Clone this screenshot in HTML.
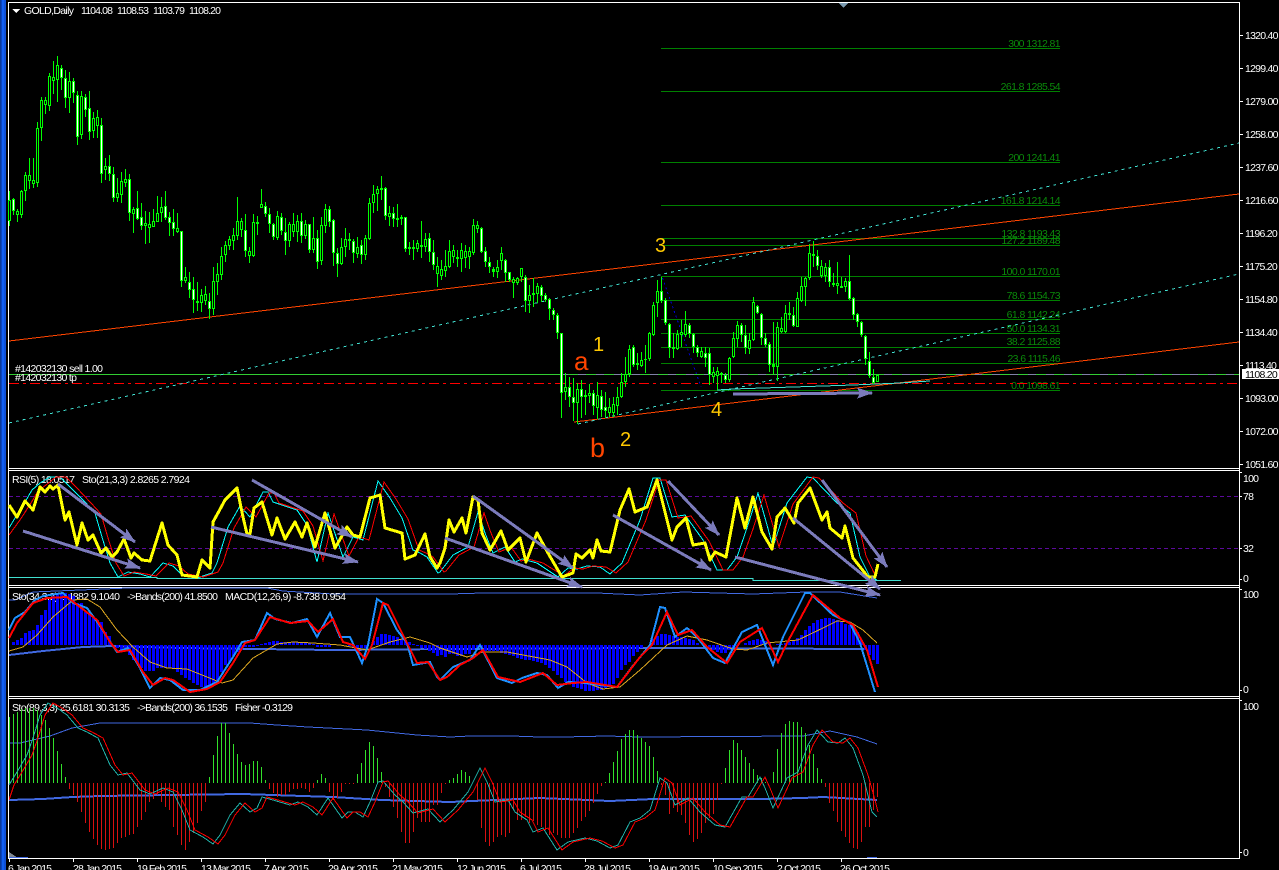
<!DOCTYPE html>
<html><head><meta charset="utf-8"><title>GOLD,Daily</title>
<style>
html,body{margin:0;padding:0;background:#000;width:1279px;height:870px;overflow:hidden}
svg{display:block;position:absolute;left:0;top:0}
text{font-family:"Liberation Sans",sans-serif;font-size:10.5px;fill:#fff;white-space:pre}
.ax{letter-spacing:-.75px}
.fib{fill:#0a8a0a;letter-spacing:-.6px;text-anchor:end}
.wave{font-size:20px;fill:#ffc800}
.wr{fill:#ff4500}
</style></head><body>
<svg width="1279" height="870" viewBox="0 0 1279 870" shape-rendering="crispEdges">
<defs>
<marker id="ah" markerUnits="userSpaceOnUse" markerWidth="18" markerHeight="14" refX="15" refY="7" orient="auto"><path d="M0 1.5L16 7L0 12.5L3 7z" fill="#7b7bbb"/></marker>
<clipPath id="c3"><rect x="9" y="699" width="870" height="159"/></clipPath>
<clipPath id="c2"><rect x="9" y="471" width="870" height="114"/></clipPath>
</defs>
<rect width="1279" height="870" fill="#000"/>
<!-- left strip -->
<rect x="0" y="0" width="1" height="870" fill="#0a3a9a"/>
<rect x="1" y="0" width="1" height="870" fill="#0c44c0"/>
<rect x="2" y="0" width="2" height="870" fill="#1260f0"/>
<rect x="4" y="0" width="2" height="870" fill="#0f50d8"/>
<!-- frame -->
<g fill="#fff">
<rect x="8" y="2" width="1232" height="1"/>
<rect x="8" y="2" width="1" height="856"/>
<rect x="1239" y="2" width="1" height="856"/>
<rect x="8" y="468" width="1232" height="1"/><rect x="8" y="470" width="1232" height="1"/>
<rect x="8" y="585" width="1232" height="1"/><rect x="8" y="587" width="1232" height="1"/>
<rect x="8" y="696" width="1232" height="1"/><rect x="8" y="698" width="1232" height="1"/>
<rect x="8" y="858" width="1232" height="1"/>
</g>
<polygon points="839,3 848,3 843.5,8" fill="#7a9ab0"/>
<polygon points="12,9 20,9 16,13" fill="#fff"/>
<!-- axis ticks -->
<path d="M1240 35.5h3M1240 68.5h3M1240 101.5h3M1240 134.5h3M1240 167.5h3M1240 200.5h3M1240 233.5h3M1240 266.5h3M1240 299.5h3M1240 332.5h3M1240 365.5h3M1240 398.5h3M1240 431.5h3M1240 464.5h3M1240 472.5h2M1240 496.5h2M1240 548.5h2M1240 579.5h2M1240 589.5h2M1240 690.5h2M1240 700.5h2M1240 852.5h2" stroke="#fff" fill="none"/>
<path d="M9.5 859v3M73.5 859v3M137.5 859v3M201.5 859v3M265.5 859v3M329.5 859v3M393.5 859v3M457.5 859v3M521.5 859v3M585.5 859v3M649.5 859v3M713.5 859v3M777.5 859v3M841.5 859v3" stroke="#fff" fill="none"/>
<!-- header text -->
<text x="24" y="14" textLength="50">GOLD,Daily</text>
<text x="81" y="14" textLength="32">1104.08</text><text x="117" y="14" textLength="32">1108.53</text><text x="153" y="14" textLength="32">1103.79</text><text x="189" y="14" textLength="32">1108.20</text>
<!-- price axis -->
<g class="ax">
<text x="1245" y="39">1320.40</text><text x="1245" y="72">1299.40</text><text x="1245" y="105">1279.00</text><text x="1245" y="138">1258.00</text><text x="1245" y="171">1237.60</text><text x="1245" y="204">1216.60</text><text x="1245" y="237">1196.20</text><text x="1245" y="270">1175.20</text><text x="1245" y="303">1154.80</text><text x="1245" y="336">1134.40</text><text x="1245" y="369">1113.40</text><text x="1245" y="402">1093.00</text><text x="1245" y="435">1072.00</text><text x="1245" y="468">1051.60</text>
<text x="1243" y="482">100</text><text x="1243" y="500">78</text><text x="1243" y="552">32</text><text x="1243" y="582">0</text>
<text x="1243" y="598">100</text><text x="1243" y="693">0</text><text x="1243" y="710">100</text><text x="1243" y="856">0</text>
</g>
<rect x="1242" y="369" width="37" height="10" fill="#fff"/>
<text x="1245" y="378" class="ax" style="fill:#000">1108.20</text>
<!-- fib levels -->
<path d="M661 48.5H1060M661 91.5H1060M661 162.5H1060M661 205.5H1060M661 238.5H1060M661 245.5H1060M661 276.5H1060M661 300.5H1060M661 319.5H1060M661 333.5H1060M661 347.5H1060M661 363.5H1060M661 390.5H1060" stroke="#008000" fill="none"/>
<text class="fib" x="1060" y="47">300 1312.81</text><text class="fib" x="1060" y="90">261.8 1285.54</text><text class="fib" x="1060" y="161">200 1241.41</text><text class="fib" x="1060" y="204">161.8 1214.14</text><text class="fib" x="1060" y="237">132.8 1193.43</text><text class="fib" x="1060" y="244">127.2 1189.48</text><text class="fib" x="1060" y="275">100.0 1170.01</text><text class="fib" x="1060" y="299">78.6 1154.73</text><text class="fib" x="1060" y="318">61.8 1142.24</text><text class="fib" x="1060" y="332">50.0 1134.31</text><text class="fib" x="1060" y="345">38.2 1125.88</text><text class="fib" x="1060" y="362">23.6 1115.46</text><text class="fib" x="1060" y="389">0.0 1098.61</text>
<!-- order lines -->
<path d="M9 374.5H1239" stroke="#32cd32" fill="none"/>
<path d="M560 374.5H1239" stroke="#8080a8" stroke-dasharray="8 10" fill="none"/>
<path d="M9 383.5H1239" stroke="#f00" stroke-dasharray="10 4 3 4" fill="none"/>
<text x="15" y="372" textLength="88">#142032130 sell 1.00</text>
<text x="15" y="381" textLength="62">#142032130 tp</text>
<!-- trend lines -->
<path d="M9 341L1239 194M574 422L1239 342" stroke="#ff4500" fill="none"/>
<path d="M9 423L1239 143M578 424L1239 274" stroke="#40e0d0" stroke-dasharray="3 4" fill="none"/>
<path d="M662.5 278L701 387" stroke="#0000cd" stroke-dasharray="2 3" fill="none"/>
<path d="M717 390L733 389L793 387L853 385L900 383L930 381" stroke="#40e0d0" fill="none"/>
<!-- candles: wicks -->
<path stroke="#00ff00" fill="none" d="M9.5 191V226M13.5 198V215M17.5 209V222M21.5 190V218M25.5 172V201M29.5 158V189M33.5 158V188M37.5 122V187M41.5 97V141M45.5 97V114M49.5 73V111M53.5 61V94M57.5 56V102M61.5 65V90M65.5 70V108M69.5 72V113M73.5 78V103M77.5 91V145M81.5 91V139M85.5 94V117M89.5 91V140M93.5 112V138M97.5 110V138M101.5 118V183M105.5 158V180M109.5 155V181M113.5 167V202M117.5 178V202M121.5 172V203M125.5 169V187M129.5 174V221M133.5 207V233M137.5 191V220M141.5 203V230M145.5 211V244M149.5 212V243M153.5 209V227M157.5 196V222M161.5 197V222M165.5 191V220M169.5 212V236M173.5 209V236M177.5 213V233M181.5 232V287M185.5 267V283M189.5 272V298M193.5 277V313M197.5 282V311M201.5 289V312M205.5 286V305M209.5 293V319M213.5 267V315M217.5 263V295M221.5 247V280M225.5 241V262M229.5 236V250M233.5 228V250M237.5 197V240M241.5 218V237M245.5 214V257M249.5 247V263M253.5 214V257M257.5 216V235M261.5 189V208M265.5 202V217M269.5 208V233M273.5 223V240M277.5 211V240M281.5 213V235M285.5 218V255M289.5 222V247M293.5 213V237M297.5 215V242M301.5 213V243M305.5 220V239M309.5 224V253M313.5 217V253M317.5 230V269M321.5 217V265M325.5 204V233M329.5 206V227M333.5 219V266M337.5 248V277M341.5 238V265M345.5 228V257M349.5 233V250M353.5 239V263M357.5 237V258M361.5 240V264M365.5 235V260M369.5 198V240M373.5 185V213M377.5 186V211M381.5 176V200M385.5 187V220M389.5 206V226M393.5 207V227M397.5 204V227M401.5 215V225M405.5 217V252M409.5 242V255M413.5 240V260M417.5 240V252M421.5 221V258M425.5 233V252M429.5 233V262M433.5 240V270M437.5 257V287M441.5 260V280M445.5 250V277M449.5 240V268M453.5 245V263M457.5 250V267M461.5 243V272M465.5 245V268M469.5 247V269M473.5 219V255M477.5 221V233M481.5 227V253M485.5 247V267M489.5 257V273M493.5 267V277M497.5 260V278M501.5 247V270M505.5 259V282M509.5 272V282M513.5 277V298M517.5 277V285M521.5 268V282M525.5 275V312M529.5 285V313M533.5 278V307M537.5 283V303M541.5 285V302M545.5 293V302M549.5 298V320M553.5 308V320M557.5 313V339M561.5 333V418M565.5 373V400M569.5 377V407M573.5 378V421M577.5 383V424M581.5 380V418M585.5 390V415M589.5 384V403M593.5 390V415M597.5 382V419M601.5 390V417M605.5 392V418M609.5 398V417M613.5 397V417M617.5 387V415M621.5 373V398M625.5 357V387M629.5 345V377M633.5 345V367M637.5 353V370M641.5 352V367M645.5 345V373M649.5 332V361M653.5 302V336M657.5 280V317M661.5 277V303M665.5 298V325M669.5 323V358M673.5 333V358M677.5 330V350M681.5 320V347M685.5 311V337M689.5 323V338M693.5 333V353M697.5 345V357M701.5 347V358M705.5 347V367M709.5 348V385M713.5 367V383M717.5 367V390M721.5 372V383M725.5 373V383M729.5 357V382M733.5 332V358M737.5 321V347M741.5 323V342M745.5 325V354M749.5 333V354M753.5 297V341M757.5 305V314M761.5 313V345M765.5 333V347M769.5 342V372M773.5 322V374M777.5 322V381M781.5 317V333M785.5 305V333M789.5 302V320M793.5 307V327M797.5 292V327M801.5 277V302M805.5 277V306M809.5 244V280M813.5 241V267M817.5 250V270M821.5 260V278M825.5 263V282M829.5 260V287M833.5 273V287M837.5 262V294M841.5 277V288M845.5 278V292M849.5 255V300M853.5 297V320M857.5 313V327M861.5 321V337M865.5 335V365M869.5 352V378M873.5 369V384M877.5 374V382"/>
<!-- bodies -->
<path stroke="#00ff00" stroke-width="3" fill="none" d="M9.5 200V221M13.5 199V211M17.5 211V215M21.5 191V215M25.5 175V191M29.5 175V181M33.5 180V184M37.5 128V183M41.5 100V128M45.5 100V105M49.5 76V106M53.5 77V81M57.5 65V80M61.5 68V78M65.5 78V98M69.5 81V98M73.5 81V93M77.5 95V137M81.5 96V135M85.5 97V110M89.5 108V132M93.5 118V131M97.5 117V126M101.5 125V174M105.5 166V170M109.5 166V174M113.5 174V198M117.5 193V198M121.5 181V195M125.5 179V183M129.5 179V213M133.5 209V214M137.5 208V219M141.5 217V226M145.5 223V226M149.5 224V228M153.5 221V227M157.5 213V222M161.5 207V213M165.5 206V218M169.5 217V223M173.5 222V229M177.5 228V232M181.5 231V281M185.5 277V281M189.5 282V290M193.5 289V300M197.5 301V303M201.5 295V303M205.5 294V301M209.5 301V309M213.5 281V309M217.5 274V282M221.5 256V275M225.5 245V255M229.5 239V246M233.5 235V241M237.5 221V236M241.5 221V230M245.5 230V251M249.5 251V256M253.5 222V256M257.5 222V224M261.5 204V208M265.5 206V214M269.5 214V224M273.5 224V237M277.5 216V238M281.5 217V231M285.5 232V241M289.5 224V241M293.5 224V232M297.5 221V232M301.5 221V236M305.5 224V236M309.5 224V250M313.5 238V250M317.5 238V262M321.5 225V261M325.5 209V226M329.5 209V222M333.5 220V253M337.5 253V264M341.5 247V264M345.5 239V247M349.5 239V241M353.5 241V253M357.5 247V254M361.5 245V255M365.5 238V255M369.5 203V239M373.5 194V203M377.5 189V194M381.5 188V190M385.5 188V216M389.5 213V217M393.5 213V219M397.5 218V220M401.5 217V219M405.5 217V249M409.5 247V249M413.5 247V249M417.5 243V249M421.5 245V247M425.5 239V247M429.5 238V252M433.5 252V265M437.5 266V274M441.5 269V276M445.5 266V271M449.5 251V267M453.5 250V257M457.5 257V259M461.5 250V259M465.5 251V258M469.5 251V257M473.5 225V253M477.5 225V229M481.5 228V252M485.5 251V262M489.5 262V267M493.5 269V272M497.5 267V272M501.5 253V261M505.5 260V273M509.5 272V280M513.5 279V283M517.5 278V283M521.5 268V277M525.5 277V301M529.5 295V301M533.5 293V295M537.5 286V294M541.5 287V296M545.5 295V300M549.5 299V309M553.5 310V315M557.5 315V333M561.5 333V393M565.5 387V392M569.5 387V397M573.5 397V403M577.5 389V403M581.5 389V397M585.5 395V397M589.5 393V396M593.5 393V406M597.5 395V408M601.5 396V410M605.5 407V411M609.5 407V413M613.5 404V413M617.5 397V406M621.5 382V397M625.5 374V382M629.5 349V374M633.5 347V365M637.5 363V365M641.5 360V366M645.5 359V360M649.5 333V359M653.5 305V335M657.5 291V303M661.5 291V301M665.5 300V323M669.5 324V348M673.5 347V349M677.5 334V349M681.5 332V335M685.5 324V335M689.5 325V334M693.5 334V347M697.5 347V353M701.5 351V357M705.5 353V358M709.5 353V375M713.5 372V377M717.5 371V376M721.5 373V375M725.5 375V380M729.5 358V380M733.5 338V357M737.5 325V339M741.5 325V335M745.5 335V348M749.5 340V349M753.5 302V340M757.5 306V313M761.5 314V338M765.5 338V345M769.5 344V365M773.5 364V367M777.5 327V367M781.5 328V332M785.5 313V332M789.5 313V315M793.5 315V326M797.5 298V327M801.5 286V301M805.5 278V287M809.5 253V278M813.5 254V256M817.5 256V266M821.5 266V276M825.5 267V276M829.5 267V282M833.5 283V285M837.5 283V286M841.5 286V288M845.5 281V287M849.5 281V299M853.5 298V315M857.5 314V322M861.5 322V335M865.5 336V359M869.5 361V376M873.5 377V383M877.5 375V382"/>
<!-- bear (white) cores -->
<path stroke="#fff" fill="none" d="M13.5 200V210M61.5 69V77M65.5 79V97M73.5 82V92M77.5 96V136M85.5 98V109M89.5 109V131M101.5 126V173M109.5 167V173M113.5 175V197M129.5 180V212M137.5 209V218M141.5 218V225M165.5 207V217M169.5 218V222M173.5 223V228M181.5 232V280M189.5 283V289M193.5 290V299M209.5 302V308M245.5 231V250M265.5 207V213M269.5 215V223M273.5 225V236M281.5 218V230M285.5 233V240M301.5 222V235M309.5 225V249M317.5 239V261M329.5 210V221M333.5 221V252M337.5 254V263M353.5 242V252M361.5 246V254M385.5 189V215M393.5 214V218M405.5 218V248M429.5 239V251M433.5 253V264M481.5 229V251M485.5 252V261M489.5 263V266M505.5 261V272M509.5 273V279M525.5 278V300M541.5 288V295M545.5 296V299M549.5 300V308M553.5 311V314M557.5 316V332M561.5 334V392M569.5 388V396M573.5 398V402M581.5 390V396M593.5 394V405M601.5 397V409M605.5 408V410M633.5 348V364M661.5 292V300M665.5 301V322M669.5 325V347M689.5 326V333M693.5 335V346M697.5 348V352M705.5 354V357M709.5 354V374M725.5 376V379M741.5 326V334M745.5 336V347M757.5 307V312M761.5 315V337M765.5 339V344M769.5 345V364M793.5 316V325M817.5 257V265M829.5 268V281M849.5 282V298M853.5 299V314M857.5 315V321M861.5 323V334M865.5 337V358M869.5 362V375M873.5 378V382"/>
<!-- bull (black) cores -->
<path stroke="#000" fill="none" d="M9.5 201V220M17.5 212V214M21.5 192V214M25.5 176V190M29.5 176V180M33.5 181V183M37.5 129V182M41.5 101V127M45.5 101V104M49.5 77V105M53.5 78V80M57.5 66V79M69.5 82V97M81.5 97V134M93.5 119V130M97.5 118V125M105.5 167V169M117.5 194V197M121.5 182V194M125.5 180V182M133.5 210V213M145.5 224V225M149.5 225V227M153.5 222V226M157.5 214V221M161.5 208V212M177.5 229V231M185.5 278V280M201.5 296V302M205.5 295V300M213.5 282V308M217.5 275V281M221.5 257V274M225.5 246V254M229.5 240V245M233.5 236V240M237.5 222V235M241.5 222V229M249.5 252V255M253.5 223V255M261.5 205V207M277.5 217V237M289.5 225V240M293.5 225V231M297.5 222V231M305.5 225V235M313.5 239V249M321.5 226V260M325.5 210V225M341.5 248V263M345.5 240V246M357.5 248V253M365.5 239V254M369.5 204V238M373.5 195V202M377.5 190V193M389.5 214V216M417.5 244V248M425.5 240V246M437.5 267V273M441.5 270V275M445.5 267V270M449.5 252V266M453.5 251V256M461.5 251V258M465.5 252V257M469.5 252V256M473.5 226V252M477.5 226V228M497.5 268V271M501.5 254V260M513.5 280V282M517.5 279V282M521.5 269V276M529.5 296V300M537.5 287V293M565.5 388V391M577.5 390V402M589.5 394V395M597.5 396V407M609.5 408V412M613.5 405V412M617.5 398V405M621.5 383V396M625.5 375V381M629.5 350V373M641.5 361V365M649.5 334V358M653.5 306V334M657.5 292V302M677.5 335V348M681.5 333V334M685.5 325V334M701.5 352V356M713.5 373V376M717.5 372V375M729.5 359V379M733.5 339V356M737.5 326V338M749.5 341V348M753.5 303V339M777.5 328V366M781.5 329V331M785.5 314V331M797.5 299V326M801.5 287V300M805.5 279V286M809.5 254V277M821.5 267V275M825.5 268V275M837.5 284V285M845.5 282V286M877.5 376V381"/>
<!-- wave labels -->
<g shape-rendering="auto">
<text class="wave" x="655" y="252">3</text><text class="wave" x="593" y="351">1</text><text class="wave" x="620" y="446">2</text><text class="wave" x="711" y="416">4</text>
<text class="wr" x="574" y="370" style="font-size:26px">a</text><text class="wr" x="590" y="457" style="font-size:27px">b</text>
</g>
<!-- RSI pane -->
<path d="M9 496.5H1239M9 548.5H1239" stroke="#5c0a9c" stroke-dasharray="4 3" fill="none"/>
<path d="M9 577.5H157V578.5H753V580.5H901" stroke="#40e0d0" fill="none"/>
<text x="12" y="483" textLength="63">RSI(5) 18.0517</text>
<text x="82" y="483" textLength="108">Sto(21,3,3) 2.8265 2.7924</text>
<polyline id="rsiC" fill="none" stroke="#00ffff" points="9,528 15,518 25,502 32,490 40,483 50,477 60,477 70,487 85,502 95,513 102,537 110,563 118,577 128,572 140,574 150,577 163,563 173,566 182,575 197,578 212,573 217,563 228,527 240,506 250,517 263,492 268,492 273,502 297,510 307,525 317,562 328,513 343,557 353,537 363,540 378,481 390,498 402,518 413,550 420,553 427,557 438,573 440,572 453,555 468,547 478,512 485,533 493,553 505,547 515,562 522,559 537,563 558,577 568,568 577,569 587,566 600,567 610,574 622,563 640,520 653,478 660,478 672,517 685,515 703,540 717,570 727,570 737,557 747,528 758,493 767,525 773,547 787,503 807,477 813,478 837,503 850,513 860,557 870,577 877,580"/>
<polyline clip-path="url(#c2)" fill="none" stroke="#f00" points="9,535 20,520 31,503 38,491 46,485 56,477 66,477 76,487 91,503 101,514 108,538 116,563 124,576 134,572 146,574 156,576 169,563 179,566 188,574 203,577 218,572 223,563 234,528 246,507 256,517 269,493 274,493 279,503 303,511 313,526 323,561 334,514 349,556 359,537 369,540 384,482 396,499 408,519 419,550 426,553 433,557 444,572 446,571 459,555 474,547 484,513 491,533 499,552 511,547 521,561 528,559 543,563 564,576 574,568 583,569 593,566 606,567 616,573 628,562 646,520 659,480 666,480 678,518 691,516 709,541 723,570 733,570 743,557 753,529 764,495 773,526 779,547 793,504 813,477 819,478 843,503 856,513 866,556 876,577"/>
<polyline fill="none" stroke="#ffff00" stroke-width="3" stroke-linejoin="round" points="9,505 17,517 25,501 33,510 40,487 45,492 50,486 53,489 58,485 65,520 69,512 77,545 82,523 88,540 93,535 101,553 106,548 112,557 117,552 124,539 131,558 134,553 142,560 150,561 162,523 168,545 177,555 182,575 197,577 202,560 210,568 213,522 218,513 225,500 237,488 243,517 247,534 250,534 254,508 262,502 272,535 277,518 285,539 295,522 302,537 307,523 315,547 325,513 335,548 347,527 353,535 360,537 370,498 380,495 385,528 402,533 405,559 415,555 425,534 430,557 437,568 440,563 445,548 449,520 454,532 462,518 466,533 473,497 478,500 482,533 490,550 501,531 508,550 520,538 526,562 537,533 548,553 562,577 573,573 576,554 582,558 590,550 593,558 597,540 601,551 610,552 620,510 629,489 635,512 647,507 657,480 672,540 677,527 686,518 693,545 705,543 710,560 715,552 726,557 737,498 745,528 753,497 762,532 772,549 777,517 785,508 794,523 798,503 810,488 822,520 827,512 830,528 842,538 845,526 853,558 868,577 875,577 878,564"/>
<!-- MACD pane -->
<polyline fill="none" stroke="#4169e1" stroke-width="2" points="9,655 43,651 83,647 113,646 180,648 257,649 333,650 450,649 653,648 867,649"/>
<polyline fill="none" stroke="#4169e1" points="9,600 15,600 33,592 128,588 267,588 283,591 333,594 450,594 483,593 533,593 597,593 640,595 683,592 753,594 807,592 840,592 877,598"/>
<text x="12" y="600" textLength="108">Sto(34,3,3) 8.4882 9.1040</text>
<text x="127" y="600" textLength="91">-&gt;Bands(200) 41.8500</text>
<text x="225" y="600" textLength="121">MACD(12,26,9) -8.738 0.954</text>
<path stroke="#0000ff" stroke-width="3" fill="none" d="M13.5 645V642M17.5 645V640M21.5 645V638M25.5 645V633M29.5 645V631M33.5 645V630M37.5 645V625M41.5 645V615M45.5 645V610M49.5 645V600M53.5 645V596M57.5 645V594M61.5 645V593M65.5 645V593M69.5 645V594M73.5 645V596M77.5 645V603M81.5 645V603M85.5 645V612M89.5 645V613M93.5 645V617M97.5 645V620M101.5 645V622M105.5 645V632M109.5 645V636M117.5 645V648M121.5 645V652M125.5 645V650M129.5 645V655M133.5 645V660M137.5 645V664M141.5 645V668M145.5 645V671M149.5 645V671M153.5 645V671M157.5 645V668M161.5 645V668M165.5 645V668M169.5 645V668M173.5 645V668M177.5 645V672M181.5 645V675M185.5 645V678M189.5 645V680M193.5 645V683M197.5 645V685M201.5 645V687M205.5 645V688M209.5 645V688M213.5 645V685M217.5 645V680M221.5 645V672M225.5 645V665M229.5 645V662M233.5 645V656M237.5 645V652M241.5 645V650M245.5 645V647M249.5 645V647M253.5 645V647M257.5 645V646M261.5 645V644M265.5 645V643M269.5 645V642M273.5 645V641M277.5 645V641M281.5 645V642M285.5 645V642M289.5 645V642M293.5 645V642M297.5 645V642M301.5 645V642M305.5 645V642M309.5 645V643M313.5 645V644M317.5 645V647M321.5 645V647M325.5 645V647M329.5 645V647M333.5 645V644M349.5 645V646M353.5 645V648M357.5 645V648M361.5 645V648M365.5 645V648M373.5 645V641M377.5 645V637M381.5 645V634M385.5 645V634M389.5 645V635M393.5 645V636M397.5 645V637M401.5 645V639M405.5 645V640M409.5 645V642M413.5 645V644M417.5 645V646M421.5 645V648M425.5 645V649M429.5 645V651M433.5 645V653M437.5 645V656M441.5 645V655M445.5 645V657M449.5 645V654M453.5 645V654M457.5 645V656M461.5 645V656M465.5 645V654M469.5 645V654M473.5 645V650M477.5 645V648M481.5 645V650M485.5 645V651M489.5 645V651M493.5 645V651M497.5 645V651M501.5 645V653M505.5 645V654M509.5 645V655M513.5 645V656M517.5 645V658M521.5 645V659M525.5 645V660M529.5 645V660M533.5 645V661M537.5 645V662M541.5 645V663M545.5 645V665M549.5 645V668M553.5 645V671M557.5 645V675M561.5 645V678M565.5 645V682M569.5 645V684M573.5 645V687M577.5 645V688M581.5 645V689M585.5 645V691M589.5 645V691M593.5 645V691M597.5 645V690M601.5 645V690M605.5 645V688M609.5 645V686M613.5 645V684M617.5 645V678M621.5 645V670M625.5 645V665M629.5 645V662M633.5 645V656M637.5 645V652M641.5 645V648M653.5 645V639M657.5 645V636M661.5 645V634M665.5 645V634M669.5 645V635M673.5 645V636M677.5 645V637M681.5 645V637M685.5 645V638M689.5 645V639M693.5 645V640M697.5 645V643M709.5 645V647M713.5 645V650M717.5 645V652M721.5 645V653M725.5 645V653M729.5 645V650M733.5 645V648M737.5 645V646M745.5 645V643M749.5 645V641M753.5 645V640M757.5 645V639M761.5 645V640M765.5 645V641M769.5 645V643M777.5 645V644M781.5 645V644M785.5 645V643M789.5 645V642M793.5 645V640M797.5 645V638M801.5 645V635M805.5 645V630M809.5 645V626M813.5 645V623M817.5 645V620M821.5 645V619M825.5 645V618M829.5 645V618M833.5 645V619M837.5 645V620M841.5 645V622M845.5 645V624M849.5 645V625M853.5 645V627M857.5 645V632M861.5 645V640M865.5 645V650M869.5 645V655M873.5 645V660M877.5 645V664"/>
<polyline fill="none" stroke="#daa520" points="9,651 23,647 37,635 53,617 73,600 87,599 100,607 117,630 133,647 150,662 167,668 187,669 207,677 222,683 233,680 253,658 277,644 293,642 313,643 340,645 367,650 390,642 410,637 430,643 440,648 467,657 483,652 507,652 550,660 567,667 587,683 603,689 620,687 640,670 667,645 687,636 707,640 733,649 747,650 767,643 798,640 823,628 837,621 850,622 863,630 877,643"/>
<polyline fill="none" stroke="#1e90ff" stroke-width="2" points="9,630 15,618 25,612 35,600 43,596 63,593 73,603 87,608 98,623 107,637 117,652 128,648 140,668 150,688 160,678 170,680 183,690 200,690 217,682 233,657 242,642 255,640 267,613 275,619 292,623 307,619 317,637 330,613 340,637 350,637 362,663 368,645 377,599 383,603 397,630 407,643 413,665 430,662 437,677 440,680 453,667 470,660 480,645 497,678 512,683 522,678 537,673 547,675 558,688 568,682 585,683 617,687 632,667 650,645 660,607 665,608 675,637 687,628 697,637 713,658 725,663 742,632 757,625 773,665 783,637 805,593 810,593 833,615 850,623 860,643 875,692"/>
<polyline fill="none" stroke="#f00" stroke-width="2" points="9,638 17,623 33,603 47,598 67,597 80,607 97,620 110,642 118,652 130,650 143,672 153,685 165,678 173,680 190,692 207,689 220,682 233,663 245,643 255,640 270,617 290,623 308,621 318,632 333,619 343,642 353,645 365,659 372,645 383,603 388,605 403,635 417,663 428,662 440,680 447,677 460,665 473,658 483,650 498,677 520,682 543,673 557,685 573,683 587,682 617,687 640,657 652,645 667,612 678,635 692,630 707,647 727,663 740,642 762,628 778,662 787,643 813,595 840,618 853,625 867,650 878,687"/>
<!-- Fisher pane -->
<polyline fill="none" stroke="#4169e1" points="9,743 20,743 33,740 50,736 72,728 100,723 250,723 277,725 308,727 367,730 417,735 450,737 470,736 512,736 540,737 563,737 607,736 640,737 803,736 830,731 857,737 877,744"/>
<polyline fill="none" stroke="#4169e1" stroke-width="2" points="9,800 43,799 73,797 100,796 243,794 333,797 382,800 450,802 540,798 610,801 653,799 760,799 803,798 823,797 877,800"/>
<text x="12" y="711" textLength="118">Sto(89,3,3) 25.6181 30.3135</text>
<text x="137" y="711" textLength="91">-&gt;Bands(200) 36.1535</text>
<text x="235" y="711" textLength="58">Fisher -0.3129</text>
<path stroke="#32e02a" fill="none" d="M9.5 783V717M13.5 783V714M17.5 783V712M21.5 783V709M25.5 783V708M29.5 783V708M33.5 783V708M37.5 783V710M41.5 783V715M45.5 783V720M49.5 783V728M53.5 783V738M57.5 783V751M61.5 783V764M65.5 783V777M209.5 783V777M213.5 783V755M217.5 783V736M221.5 783V723M225.5 783V723M229.5 783V733M233.5 783V744M237.5 783V754M241.5 783V762M245.5 783V765M249.5 783V764M253.5 783V761M257.5 783V761M261.5 783V767M265.5 783V780M317.5 783V780M321.5 783V774M325.5 783V778M357.5 783V774M361.5 783V763M365.5 783V750M369.5 783V742M373.5 783V746M377.5 783V758M381.5 783V772M449.5 783V780M453.5 783V778M457.5 783V774M461.5 783V770M465.5 783V772M469.5 783V776M605.5 783V782M609.5 783V773M613.5 783V762M617.5 783V751M621.5 783V739M625.5 783V734M629.5 783V730M633.5 783V730M637.5 783V735M641.5 783V738M645.5 783V742M649.5 783V746M653.5 783V757M657.5 783V771M725.5 783V768M729.5 783V750M733.5 783V740M737.5 783V743M741.5 783V750M745.5 783V757M749.5 783V763M753.5 783V769M757.5 783V775M761.5 783V778M765.5 783V782M773.5 783V772M777.5 783V749M781.5 783V733M785.5 783V724M789.5 783V721M793.5 783V722M797.5 783V722M801.5 783V727M805.5 783V733M809.5 783V745M813.5 783V754M817.5 783V768M821.5 783V779"/>
<path stroke="#d81010" fill="none" d="M69.5 783V789M73.5 783V795M77.5 783V802M81.5 783V812M85.5 783V823M89.5 783V832M93.5 783V839M97.5 783V845M101.5 783V849M105.5 783V850M109.5 783V849M113.5 783V848M117.5 783V843M121.5 783V838M125.5 783V837M129.5 783V835M133.5 783V834M137.5 783V827M141.5 783V820M145.5 783V812M149.5 783V802M153.5 783V799M157.5 783V795M161.5 783V802M165.5 783V807M169.5 783V810M173.5 783V827M177.5 783V835M181.5 783V845M185.5 783V850M189.5 783V842M193.5 783V833M197.5 783V823M201.5 783V811M205.5 783V802M269.5 783V789M273.5 783V793M277.5 783V797M281.5 783V795M285.5 783V795M289.5 783V792M293.5 783V789M297.5 783V789M301.5 783V788M305.5 783V789M309.5 783V792M313.5 783V788M329.5 783V792M333.5 783V800M337.5 783V798M341.5 783V792M345.5 783V784M349.5 783V784M353.5 783V784M385.5 783V787M389.5 783V797M393.5 783V807M397.5 783V818M401.5 783V832M405.5 783V843M409.5 783V843M413.5 783V832M417.5 783V818M421.5 783V822M425.5 783V822M429.5 783V822M433.5 783V805M437.5 783V805M441.5 783V793M445.5 783V784M477.5 783V800M481.5 783V828M485.5 783V842M489.5 783V846M493.5 783V842M497.5 783V837M501.5 783V835M505.5 783V837M509.5 783V833M513.5 783V810M517.5 783V820M521.5 783V820M525.5 783V817M529.5 783V823M533.5 783V821M537.5 783V825M541.5 783V827M545.5 783V830M549.5 783V835M553.5 783V833M557.5 783V835M561.5 783V838M565.5 783V838M569.5 783V838M573.5 783V833M577.5 783V828M581.5 783V821M585.5 783V817M589.5 783V811M593.5 783V803M597.5 783V794M601.5 783V786M661.5 783V785M665.5 783V795M669.5 783V814M673.5 783V808M677.5 783V812M681.5 783V815M685.5 783V823M689.5 783V835M693.5 783V842M697.5 783V839M701.5 783V833M705.5 783V823M709.5 783V818M713.5 783V814M717.5 783V800M721.5 783V784M825.5 783V787M829.5 783V803M833.5 783V811M837.5 783V822M841.5 783V831M845.5 783V837M849.5 783V843M853.5 783V848M857.5 783V849M861.5 783V842M865.5 783V827M869.5 783V827M873.5 783V810M877.5 783V797"/>
<polyline fill="none" stroke="#20b2aa" points="9,785 17,772 27,755 33,738 40,715 48,703 57,708 67,715 78,728 87,732 98,738 110,765 118,775 127,773 140,790 150,794 163,788 173,792 182,810 190,830 203,837 213,844 220,835 230,815 240,803 250,812 257,808 262,797 273,800 290,805 298,802 308,807 317,815 328,798 342,818 348,812 355,812 363,817 370,802 378,782 383,781 395,795 403,802 413,813 428,809 440,822 453,810 468,792 480,768 487,782 495,802 508,800 515,812 527,820 533,832 543,828 557,850 568,842 585,838 597,841 610,848 618,845 630,822 640,818 650,810 660,778 667,783 675,805 688,798 700,812 715,825 725,827 742,797 748,797 760,777 765,788 773,808 787,778 798,772 808,745 817,730 828,742 838,743 845,738 853,748 863,775 872,812 877,817"/>
<polyline fill="none" stroke="#f00" clip-path="url(#c3)" points="9,800 14,785 22,772 32,755 38,738 45,715 53,703 62,708 72,715 83,728 92,732 103,738 115,765 123,775 132,773 145,790 155,794 168,788 178,792 187,810 195,830 208,837 218,844 225,835 235,815 245,803 255,812 262,808 267,797 278,800 295,805 303,802 313,807 322,815 333,798 347,818 353,812 360,812 368,817 375,802 383,782 388,781 400,795 408,802 418,813 433,809 445,822 458,810 473,792 485,768 492,782 500,802 513,800 520,812 532,820 538,832 548,828 562,850 573,842 590,838 602,841 615,848 623,845 635,822 645,818 655,810 665,778 672,783 680,805 693,798 705,812 720,825 730,827 747,797 753,797 765,777 770,788 778,808 792,778 803,772 813,745 822,730 833,742 843,743 850,738 858,748 868,775 875,800 878,812"/>
<polygon points="9,852 9,858 18,858" fill="#808890"/>
<path d="M9 857.5H28M867 857.5H877" stroke="#4169e1" fill="none"/>
<!-- date labels -->
<g>
<text x="8" y="872" textLength="44">6 Jan 2015</text><text x="73" y="872" textLength="49">28 Jan 2015</text><text x="137" y="872" textLength="50">19 Feb 2015</text><text x="201" y="872" textLength="50">13 Mar 2015</text><text x="264" y="872" textLength="45">7 Apr 2015</text><text x="328" y="872" textLength="50">29 Apr 2015</text><text x="392" y="872" textLength="51">21 May 2015</text><text x="457" y="872" textLength="49">12 Jun 2015</text><text x="520" y="872" textLength="42">6 Jul 2015</text><text x="584" y="872" textLength="47">28 Jul 2015</text><text x="648" y="872" textLength="52">19 Aug 2015</text><text x="713" y="872" textLength="50">10 Sep 2015</text><text x="777" y="872" textLength="44">2 Oct 2015</text><text x="840" y="872" textLength="50">26 Oct 2015</text>
</g>
<!-- drawn arrows -->
<g stroke="#7b7bbb" stroke-width="3" fill="none">
<line x1="733" y1="394" x2="872" y2="393" marker-end="url(#ah)"/>
<line x1="58" y1="484" x2="135" y2="542" marker-end="url(#ah)"/>
<line x1="23" y1="531" x2="140" y2="568" marker-end="url(#ah)"/>
<line x1="211" y1="527" x2="358" y2="562" marker-end="url(#ah)"/>
<line x1="252" y1="480" x2="352" y2="537" marker-end="url(#ah)"/>
<line x1="473" y1="496" x2="573" y2="568" marker-end="url(#ah)"/>
<line x1="445" y1="538" x2="582" y2="587" marker-end="url(#ah)"/>
<line x1="613" y1="515" x2="711" y2="570" marker-end="url(#ah)"/>
<line x1="668" y1="481" x2="719" y2="535" marker-end="url(#ah)"/>
<line x1="735" y1="557" x2="880" y2="595" marker-end="url(#ah)"/>
<line x1="793" y1="518" x2="880" y2="589" marker-end="url(#ah)"/>
<line x1="822" y1="480" x2="887" y2="567" marker-end="url(#ah)"/>
</g>
</svg>
</body></html>
